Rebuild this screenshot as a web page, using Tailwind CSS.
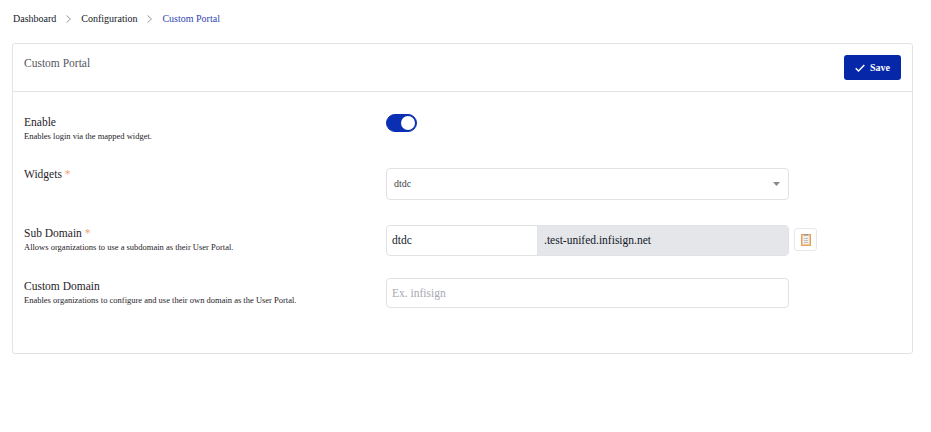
<!DOCTYPE html>
<html><head><meta charset="utf-8"><script src="https://cdn.jsdelivr.net/npm/@tailwindcss/browser@4"></script></head>
<body class="bg-white font-['Liberation_Serif',serif] w-[931px] h-[432px] overflow-hidden">
<div class="pl-3 pr-[18px] pt-[12px]">
  <nav class="flex items-center h-[13px] pl-px text-[10px] leading-[13px] text-[#111827]">
    <span>Dashboard</span>
    <svg class="w-[5px] h-[8px] ml-[10px] mr-[10px]" viewBox="0 0 5 8" fill="none" stroke="#8b8f96" stroke-width="0.9"><path d="M.5.5 4.500 4 .5 7.500"/></svg>
    <span>Configuration</span>
    <svg class="w-[5px] h-[8px] ml-[10px] mr-[10px]" viewBox="0 0 5 8" fill="none" stroke="#8b8f96" stroke-width="0.9"><path d="M.5.5 4.500 4 .5 7.500"/></svg>
    <span class="text-[#2f45b5]">Custom Portal</span>
  </nav>
  <section class="mt-[18px] h-[311px] border border-[#e2e3e5] rounded-[3px]">
    <header class="h-[48px] border-b border-[#e2e3e5] flex justify-between pl-[11px] pr-[11px]">
      <h1 class="pt-[12px] text-[11.5px] leading-[14px] text-[#55585e] font-normal">Custom Portal</h1>
      <button class="mt-[11px] w-[57px] h-[25px] bg-[#0527a8] rounded-[3px] text-white text-[10px] flex items-center justify-center gap-[5px] font-bold">
        <svg class="w-[10px] h-[8px]" viewBox="0 0 10 8" fill="none" stroke="#fff" stroke-width="1.4"><path d="M.7 4.200 3.500 7 9.300.9"/></svg>
        <span>Save</span>
      </button>
    </header>
    <div class="pl-[11px]">
      <div class="flex h-[76px] pt-[23px]">
        <div class="w-[362px]">
          <div class="text-[11.5px] leading-[14px] text-[#1f2329]">Enable</div>
          <div class="mt-px text-[8.5px] leading-[12px] text-[#1f2329]">Enables login via the mapped widget.</div>
        </div>
        <div class="w-[31px] h-[18px] -mt-[1px] rounded-full bg-[#0b2fb3] border border-[#0b2fb3] flex items-center justify-end pr-[1px]"><span class="w-[14px] h-[14px] rounded-full bg-white"></span></div>
      </div>
      <div class="flex h-[57px]">
        <div class="w-[362px]">
          <div class="text-[11.5px] leading-[14px] text-[#1f2329] -mt-[1px]">Widgets <span class="text-[#f6a27d]">*</span></div>
        </div>
        <div class="w-[403px] h-[32px] border border-[#e1e2e5] rounded-[4px] flex items-center justify-between pl-[7px] pr-[8px] text-[10px] text-[#3f434a]">
          <span class="-mt-[2px]">dtdc</span>
          <svg class="w-[7px] h-[4px]" viewBox="0 0 7 4" fill="#8a8a8a"><path d="M0 0h7L3.500 4z"/></svg>
        </div>
      </div>
      <div class="flex h-[53px]">
        <div class="w-[362px] pt-[1px]">
          <div class="text-[11.5px] leading-[14px] text-[#1f2329]">Sub Domain <span class="text-[#f6a27d]">*</span></div>
          <div class="mt-px text-[8.5px] leading-[12px] text-[#1f2329]">Allows organizations to use a subdomain as their User Portal.</div>
        </div>
        <div class="w-[403px] h-[31px] flex border border-[#e1e2e5] rounded-[4px] overflow-hidden text-[11.5px] text-[#111827]">
          <div class="w-[151px] pl-[5px] leading-[29px] border-r border-[#e1e2e5]">dtdc</div>
          <div class="flex-1 pl-[6px] leading-[29px] bg-[#e5e6ea]">.test-unifed.infisign.net</div>
        </div>
        <div class="ml-[5px] mt-[3px] w-[23px] h-[23px] border border-[#e6e7ea] rounded-[3px] flex items-center justify-center">
          <svg class="w-[10px] h-[12px]" viewBox="0 0 10 12"><rect x=".5" y=".5" width="9" height="11" fill="#f0c89c" stroke="#e5a25f"/><rect x="2" y="2" width="6" height="8" fill="#f1f1f1"/><rect x="3" y="0" width="4" height="1.500" fill="#9a9a9a"/><path d="M3 4.500h4M3 6.500h4M3 8.500h4" stroke="#aaa" stroke-width=".7"/></svg>
        </div>
      </div>
      <div class="flex">
        <div class="w-[362px] pt-[1px]">
          <div class="text-[11.5px] leading-[14px] text-[#1f2329]">Custom Domain</div>
          <div class="mt-px text-[8.5px] leading-[12px] text-[#1f2329]">Enables organizations to configure and use their own domain as the User Portal.</div>
        </div>
        <div class="w-[403px] h-[30px] border border-[#e1e2e5] rounded-[4px] pl-[5px] leading-[28px] text-[11.5px] text-[#a6a9b0]">Ex. infisign</div>
      </div>
    </div>
  </section>
</div>
</body></html>
